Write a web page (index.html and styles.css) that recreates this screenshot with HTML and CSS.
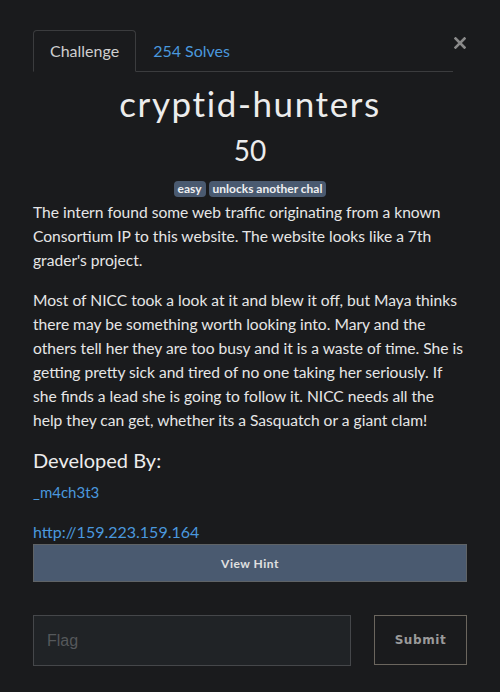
FILE: index.html
```html
<!DOCTYPE html>
<html>
<head>
<meta charset="utf-8">
<link rel="stylesheet" href="styles.css">
</head>
<body>
<div class="modal">
  <div class="tabs-row">
    <ul class="tabs">
      <li class="tab active">Challenge</li>
      <li class="tab link">254 Solves</li>
    </ul>
    <svg class="close" width="12" height="12" viewBox="0 0 12 12"><path d="M1.5 1.5 L10.5 10.5 M10.5 1.5 L1.5 10.5" stroke="#8a8a8a" stroke-width="2.6" stroke-linecap="square"/></svg>
  </div>
  <h2 class="title">cryptid-hunters</h2>
  <div class="value">50</div>
  <div class="badges"><span class="badge">easy</span><span class="badge">unlocks another chal</span></div>
  <div class="desc">
    <p>The intern found some web traffic originating from a known Consortium IP to this website. The website looks like a 7th grader's project.</p>
    <p>Most of NICC took a look at it and blew it off, but Maya thinks there may be something worth looking into. Mary and the others tell her they are too busy and it is a waste of time. She is getting pretty sick and tired of no one taking her seriously. If she finds a lead she is going to follow it. NICC needs all the help they can get, whether its a Sasquatch or a giant clam!</p>
    <h4 class="dev">Developed By:</h4>
    <p class="author">_m4ch3t3</p>
    <p class="url">http://159.223.159.164</p>
  </div>
  <button class="hint">View Hint</button>
  <div class="submit-row">
    <input class="flag" placeholder="Flag">
    <button class="submit">Submit</button>
  </div>
</div>
</body>
</html>
```
FILE: styles.css
```css
html, body {
  margin: 0;
  padding: 0;
  background: #1a1b1d;
}
body {
  width: 500px;
  height: 692px;
  overflow: hidden;
  font-family: Lato, "Open Sans", sans-serif;
  color: #e8e8e8;
}
.modal {
  padding: 30px 33px 0 33px;
}
.tabs-row {
  display: flex;
  align-items: flex-start;
}
.tabs {
  list-style: none;
  margin: 0;
  padding: 0;
  display: flex;
  width: 420px;
  border-bottom: 1px solid #3b3c3e;
}
.tab {
  font-size: 16px;
  line-height: 20px;
  padding: 10px 16px 10px 16px;
  border: 1px solid transparent;
  border-radius: 4px 4px 0 0;
  margin-bottom: -1px;
}
.tab.active {
  border-color: #3b3c3e;
  border-bottom-color: #1a1b1d;
  color: #cfcfcf;
}
.tab.link {
  color: #4a98dd;
}
.close {
  display: block;
  margin-left: 1px;
  margin-top: 7px;
}
.title {
  margin: 11px 0 0 0;
  text-align: center;
  font-weight: 400;
  font-size: 35px;
  line-height: 40px;
  letter-spacing: 1.6px;
  color: #ececec;
}
.value {
  text-align: center;
  font-size: 28px;
  line-height: 34px;
  margin-top: 10px;
  color: #ececec;
}
.badges {
  display: flex;
  justify-content: center;
  gap: 3px;
  margin-top: 14px;
}
.badge {
  display: block;
  height: 16px;
  box-sizing: border-box;
  background: #4a5a70;
  color: #f0f0f0;
  font-weight: bold;
  font-size: 12px;
  line-height: 16px;
  padding: 0 4px;
  border-radius: 4px;
}
.desc {
  font-size: 15.6px;
  line-height: 24px;
  color: #e6e6e6;
  margin-top: 3px;
}
.desc p {
  margin: 0 0 16px 0;
}
.dev {
  margin: 2px 0 8px 0;
  font-size: 20px;
  line-height: 24px;
  font-weight: 400;
  color: #ececec;
}
.desc .author {
  color: #4a98dd;
  font-size: 15px;
  margin-bottom: 16px;
}
.desc .url {
  color: #4a98dd;
  font-size: 16px;
  margin: 0;
  line-height: 24px;
}
.hint {
  display: block;
  width: 434px;
  height: 38px;
  margin-top: 0;
  background: #4a5a70;
  border: 1px solid #5f6366;
  color: #e0e0e0;
  font-family: Lato, sans-serif;
  font-weight: bold;
  font-size: 12px;
  letter-spacing: 0.5px;
}
.submit-row {
  display: flex;
  justify-content: space-between;
  margin-top: 33px;
}
.flag {
  box-sizing: border-box;
  width: 318px;
  height: 51px;
  background: #202326;
  border: 1px solid #45474a;
  padding: 0 13px;
  font-family: "Liberation Sans", Arial, sans-serif;
  font-size: 16px;
  color: #ddd;
}
.flag::placeholder {
  color: #55585b;
}
.submit {
  box-sizing: border-box;
  width: 93px;
  height: 50px;
  background: transparent;
  border: 1px solid #6b665e;
  color: #9a9a9a;
  font-family: "DejaVu Sans", sans-serif;
  font-weight: bold;
  font-size: 12px;
  letter-spacing: 0.6px;
}
```
